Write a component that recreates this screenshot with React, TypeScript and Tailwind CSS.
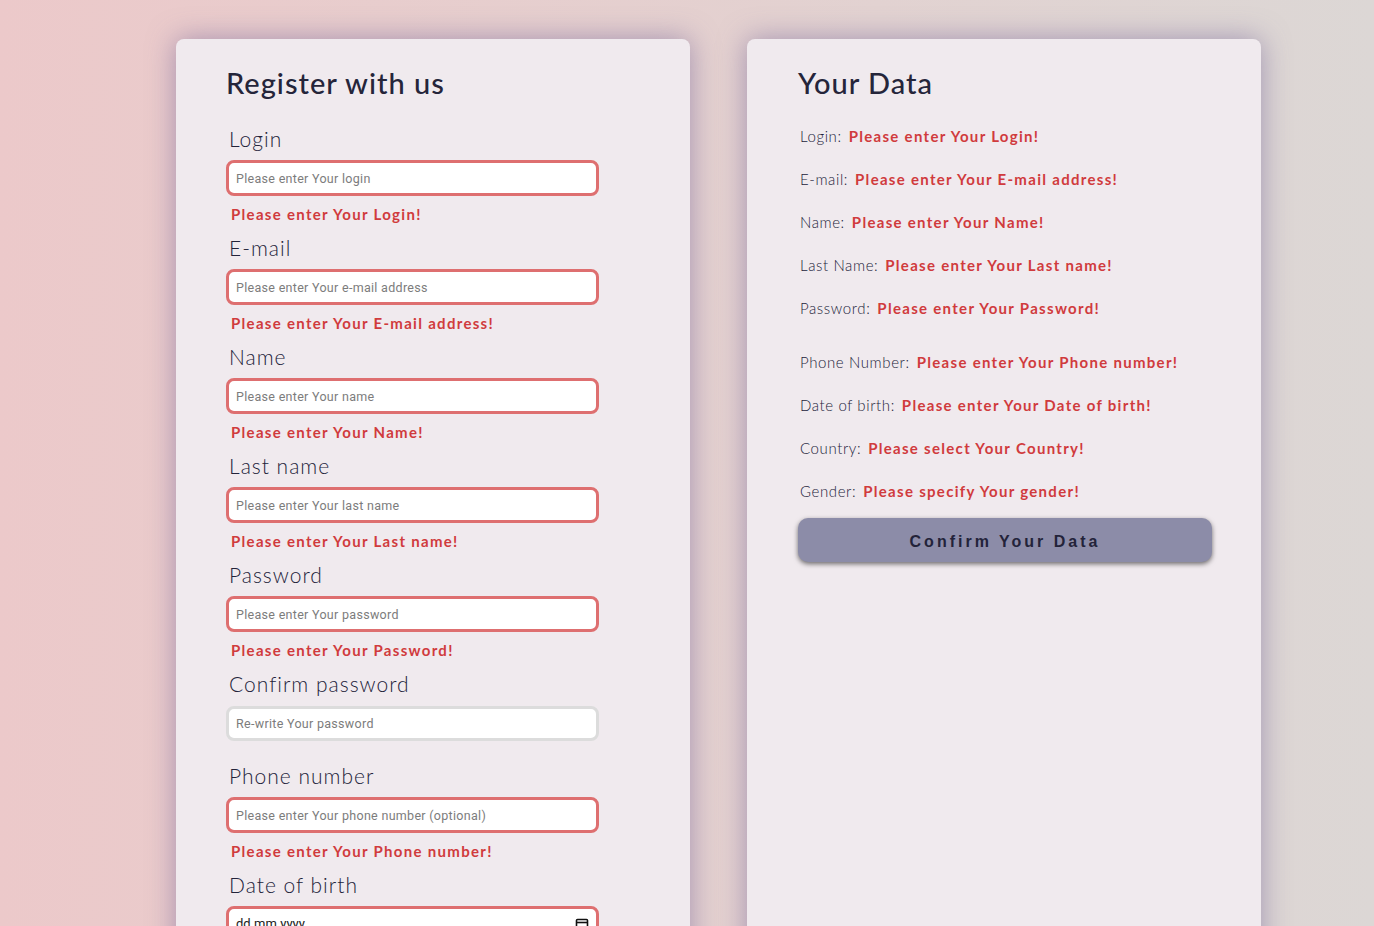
import React from 'react';

const fields = [
  { label: 'Login', placeholder: 'Please enter Your login', error: 'Please enter Your Login!' },
  { label: 'E-mail', placeholder: 'Please enter Your e-mail address', error: 'Please enter Your E-mail address!' },
  { label: 'Name', placeholder: 'Please enter Your name', error: 'Please enter Your Name!' },
  { label: 'Last name', placeholder: 'Please enter Your last name', error: 'Please enter Your Last name!' },
  { label: 'Password', placeholder: 'Please enter Your password', error: 'Please enter Your Password!' },
  { label: 'Confirm password', placeholder: 'Re-write Your password', error: '' },
  { label: 'Phone number', placeholder: 'Please enter Your phone number (optional)', error: 'Please enter Your Phone number!' },
];

const summary = [
  { label: 'Login:', error: 'Please enter Your Login!' },
  { label: 'E-mail:', error: 'Please enter Your E-mail address!' },
  { label: 'Name:', error: 'Please enter Your Name!' },
  { label: 'Last Name:', error: 'Please enter Your Last name!' },
  { label: 'Password:', error: 'Please enter Your Password!' },
  { label: 'Phone Number:', error: 'Please enter Your Phone number!', gap: true },
  { label: 'Date of birth:', error: 'Please enter Your Date of birth!' },
  { label: 'Country:', error: 'Please select Your Country!' },
  { label: 'Gender:', error: 'Please specify Your gender!' },
];

const font = { fontFamily: 'Lato, "Open Sans", sans-serif' };

function Field({ label, placeholder, error }: { label: string; placeholder: string; error: string }) {
  const ok = !error;
  return (
    <div className={ok ? 'mb-[24px]' : 'mb-[14px]'}>
      <div className="h-[24px] pl-[3px] text-[21px] font-light leading-[22px] tracking-[1px] text-[#23233a]">{label}</div>
      <input
        placeholder={placeholder}
        className={
          'block w-[373px] rounded-[8px] border-[3px] bg-white px-[7px] text-[12.5px] tracking-[0.3px] outline-none placeholder:text-[#7c7c7c] ' +
          (ok ? 'mt-[9px] h-[35px] border-[#dcdcdc]' : 'mt-[8px] h-[36px] border-[#de6f70]')
        }
        style={{ fontFamily: 'Roboto, "Liberation Sans", sans-serif' }}
      />
      {!ok && (
        <div className="mt-[9px] h-[18px] pl-[5px] text-[15px] font-bold leading-[18px] tracking-[1.3px] text-[#d03b3d]">
          {error}
        </div>
      )}
    </div>
  );
}

export default function App() {
  return (
    <div
      className="flex min-h-screen items-stretch gap-[57px] bg-gradient-to-r from-[#ecc9ca] to-[#dcd7d5] pl-[176px] pt-[39px]"
      style={font}
    >
      <div className="w-[514px] rounded-[8px] bg-[#f0eaee] px-[50px] pt-[27px] pb-[40px] shadow-[0_0_28px_rgba(110,95,150,0.55)]">
        <h1 className="h-[34px] text-[29px] font-medium leading-[34px] tracking-[1px] text-[#25253a]">Register with us</h1>
        <div className="mt-[28px]">
          {fields.map((f) => (
            <Field key={f.label} {...f} />
          ))}
          <div className="mb-[14px]">
            <div className="h-[24px] pl-[3px] text-[21px] font-light leading-[22px] tracking-[1px] text-[#23233a]">Date of birth</div>
            <div className="mt-[8px] flex h-[36px] w-[373px] items-center justify-between rounded-[8px] border-[3px] border-[#de6f70] bg-white px-[7px]">
              <span className="text-[13px] text-[#222]" style={{ fontFamily: 'Roboto, sans-serif' }}>dd.mm.yyyy</span>
              <svg width="14" height="14" viewBox="0 0 14 14" fill="none" stroke="#111" strokeWidth="1.6">
                <rect x="1.5" y="2.5" width="11" height="10" rx="1" />
                <line x1="1.5" y1="5.5" x2="12.5" y2="5.5" />
              </svg>
            </div>
            <div className="mt-[9px] h-[18px] pl-[5px] text-[15px] font-bold leading-[18px] tracking-[1.3px] text-[#d03b3d]">
              Please enter Your Date of birth!
            </div>
          </div>
        </div>
      </div>

      <div className="w-[514px] rounded-[8px] bg-[#f0eaee] pl-[51px] pr-[49px] pt-[27px] shadow-[0_0_28px_rgba(110,95,150,0.55)]">
        <h1 className="h-[34px] text-[29px] font-medium leading-[34px] tracking-[1px] text-[#25253a]">Your Data</h1>
        <div className="mt-[26px] flex flex-col gap-[23px]">
          {summary.map((s) => (
            <div key={s.label} className={'flex h-[20px] items-center pl-[2px] leading-[20px] ' + (s.gap ? 'mt-[11px]' : '')}>
              <span className="text-[15px] font-light tracking-[0.6px] text-[#23233a]">{s.label}</span>
              <span className="ml-[7px] text-[15px] font-bold tracking-[1.3px] text-[#d03b3d]">{s.error}</span>
            </div>
          ))}
        </div>
        <button
          className="mt-[17px] h-[44px] w-full rounded-[10px] bg-[#8c8ca8] pt-[3px] text-[16px] font-bold tracking-[3px] text-[#23233a] shadow-[0_2px_5px_rgba(0,0,0,0.55)]"
          style={{ fontFamily: '"Liberation Sans", Arial, sans-serif' }}
        >
          Confirm Your Data
        </button>
      </div>
    </div>
  );
}
